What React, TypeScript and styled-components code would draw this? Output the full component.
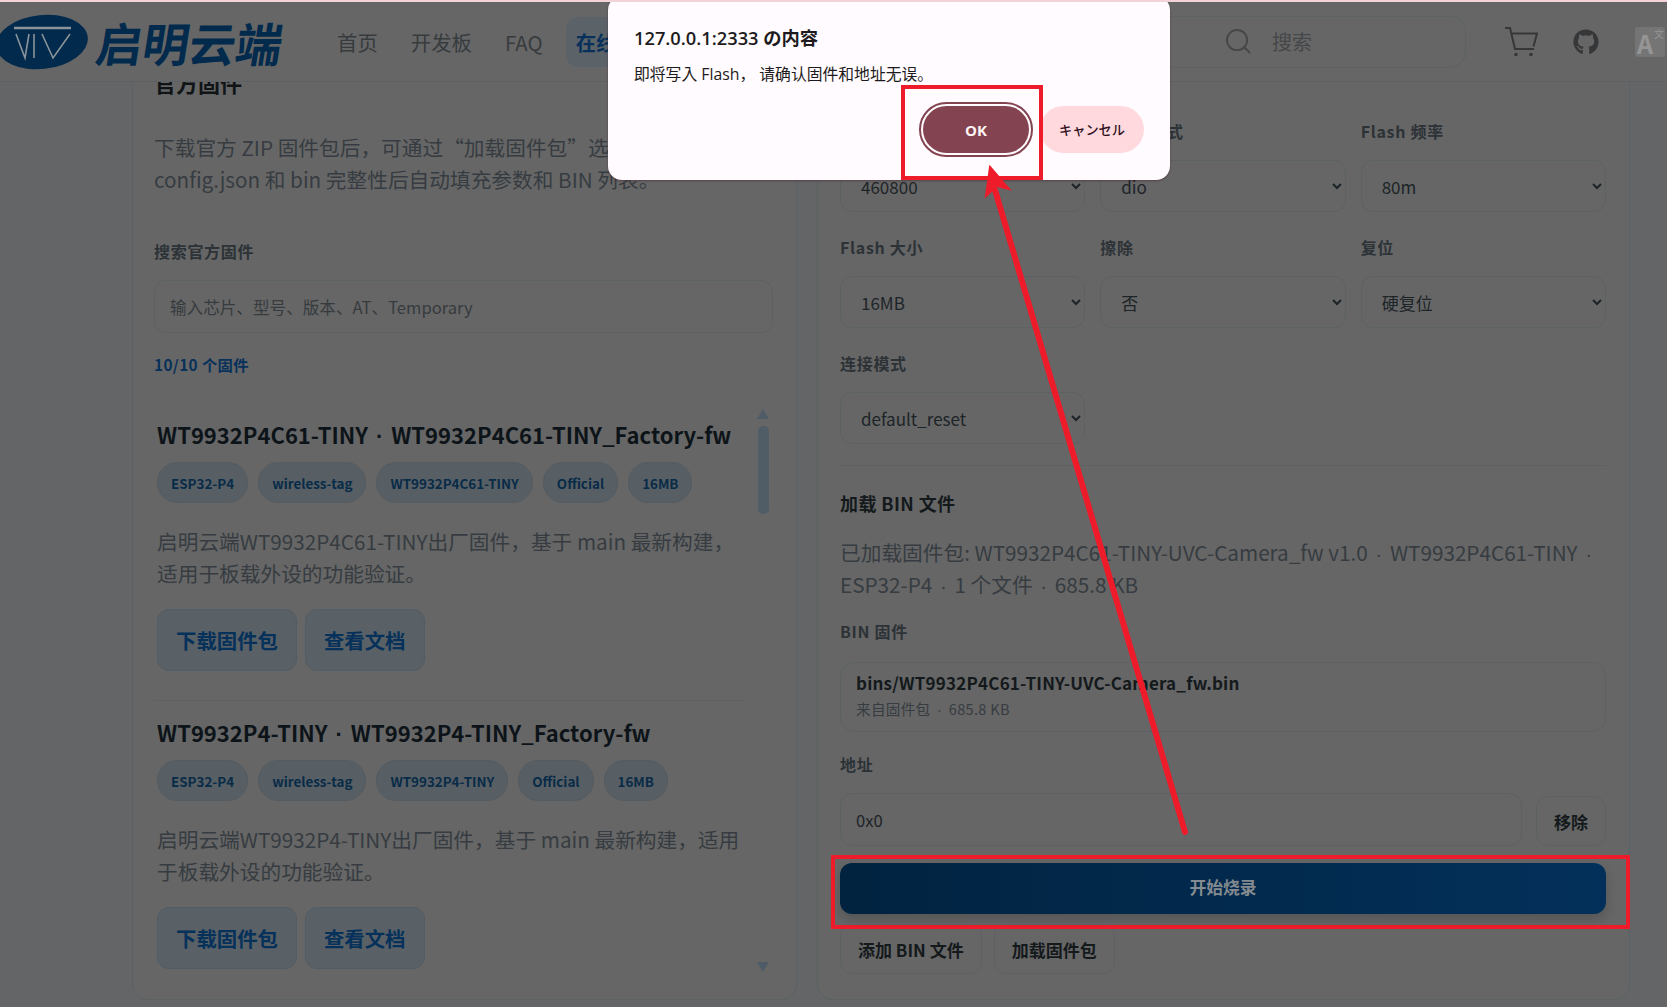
import React from 'react';
import styled, { createGlobalStyle } from 'styled-components';
import { FaGithub } from 'react-icons/fa';

const GlobalStyle = createGlobalStyle`
  html, body {
    margin: 0;
    padding: 0;
    height: 100%;
    overflow: hidden;
    background: #636566;
    font-family: "Noto Sans CJK SC", "Noto Sans", sans-serif;
  }
  * { box-sizing: border-box; }
  input::placeholder { color: #363b3e; opacity: 1; }
`;

const Page = styled.div`
  position: relative;
  width: 1667px;
  height: 1007px;
  overflow: hidden;
  border-top: 2px solid #f3d3d8;
  display: flex;
  flex-direction: column;
`;

const Header = styled.header`
  flex: none;
  height: 80px;
  display: flex;
  align-items: center;
  background: #666666;
  border-bottom: 1px solid #5e6163;
  padding-right: 2px;
`;

const Logo = styled.div`
  width: 283px;
  height: 60px;
  margin-right: 44px;
  display: flex;
  align-items: center;
  gap: 9px;
`;

const LogoText = styled.span`
  display: inline-block;
  transform: skewX(-9deg);
  font-size: 46.5px;
  line-height: 60px;
  font-weight: 700;
  color: #012a4d;
  white-space: nowrap;
`;

const Nav = styled.nav`
  display: flex;
  align-items: center;
  gap: 13px;
`;

const NavItem = styled.a<{ $active?: boolean }>`
  height: 50px;
  padding: 0 10px;
  display: flex;
  align-items: center;
  border-radius: 12px;
  font-size: 20.4px;
  white-space: nowrap;
  color: ${p => (p.$active ? '#07315a' : '#363b3e')};
  font-weight: ${p => (p.$active ? 700 : 400)};
  background: ${p => (p.$active ? '#5b6369' : 'transparent')};
`;

const HeaderRight = styled.div`
  margin-left: auto;
  display: flex;
  align-items: center;
`;

const SearchBox = styled.div`
  width: 310px;
  height: 52px;
  margin-right: 39px;
  padding-left: 69px;
  display: flex;
  align-items: center;
  gap: 21px;
  border: 1px solid #5c6264;
  border-radius: 16px;
  font-size: 20px;
  color: #454749;
`;

const HeaderIcon = styled.div<{ $right: number }>`
  display: flex;
  margin-right: ${p => p.$right}px;
  color: #363738;
`;

const TranslateBadge = styled.div`
  position: relative;
  width: 30px;
  height: 30px;
  border-radius: 3px;
  background: #757575;
  color: #959595;
  font-size: 25px;
  line-height: 32px;
  font-weight: 700;
  padding-left: 2px;
`;

const TranslateSmall = styled.span`
  position: absolute;
  top: 1px;
  right: 1px;
  font-size: 10px;
  line-height: 12px;
  font-weight: 400;
`;

const Main = styled.main`
  flex: 1;
  min-height: 0;
  overflow: hidden;
`;

const Columns = styled.div`
  margin-top: -32px;
  padding-left: 132px;
  display: grid;
  grid-template-columns: 665px 813px;
  gap: 20px;
`;

const Panel = styled.section`
  height: 950px;
  background: #666666;
  border: 1px solid #5c6163;
  border-radius: 16px;
`;

const LeftPanel = styled(Panel)`
  padding: 17px 23px 0 21px;
`;

const RightPanel = styled(Panel)`
  padding: 68px 23px 0 22px;
`;

const PanelTitle = styled.h2`
  margin: 0 0 35px;
  font-size: 22px;
  line-height: 28px;
  font-weight: 700;
  color: #101416;
`;

const Paragraph = styled.p<{ $bottom?: number }>`
  margin: 0 0 ${p => p.$bottom ?? 0}px;
  font-size: 20.7px;
  line-height: 32px;
  color: #363c41;
  white-space: nowrap;
`;

const Dot = styled.span`
  margin: 0 3px;
  line-height: 0;
  font-family: "Liberation Sans", sans-serif;
`;

const Label = styled.div`
  margin-bottom: 17px;
  font-size: 16px;
  line-height: 24px;
  font-weight: 700;
  letter-spacing: 0.7px;
  color: #2c3236;
`;

const TextInput = styled.input`
  display: block;
  width: 100%;
  height: 53px;
  padding: 0 15px;
  background: transparent;
  border: 1px solid #5c6264;
  border-radius: 12px;
  font: 400 16.6px "Noto Sans CJK SC", sans-serif;
  color: #1d2226;
  outline: none;
`;

const CountText = styled.div`
  margin-top: 19px;
  font-size: 15.3px;
  line-height: 24px;
  font-weight: 700;
  letter-spacing: 0.4px;
  color: #07315a;
`;

const ListWrap = styled.div`
  margin-top: 23px;
  height: 575px;
  display: flex;
`;

const List = styled.div`
  flex: 1;
  min-width: 0;
  overflow: hidden;
`;

const Item = styled.article`
  padding: 16px 8px 29px 3px;
  border-bottom: 1px solid #5c6264;
  &:first-child { padding-top: 20px; }
  &:last-child { border-bottom: none; }
`;

const ItemTitle = styled.h3`
  margin: 0 0 13px;
  font-size: 22px;
  line-height: 30px;
  font-weight: 700;
  color: #0d1419;
  white-space: nowrap;
`;

const Tags = styled.div`
  display: flex;
  gap: 10px;
  margin-bottom: 22px;
`;

const Tag = styled.span`
  height: 41px;
  padding: 0 13px;
  display: flex;
  align-items: center;
  border: 1px solid #545c62;
  border-radius: 20px;
  background: #585f64;
  font-size: 13.4px;
  font-weight: 700;
  color: #082b48;
`;

const ItemActions = styled.div`
  display: flex;
  gap: 8px;
  margin-top: 20px;
`;

const GhostLink = styled.a`
  height: 62px;
  padding: 0 18px;
  display: flex;
  align-items: center;
  border: 1px solid #525c64;
  border-radius: 12px;
  background: #596066;
  font-size: 20.4px;
  font-weight: 700;
  color: #05315a;
`;

const Track = styled.div`
  flex: none;
  width: 12px;
  margin: 10px 4px 0 12px;
  display: flex;
  flex-direction: column;
  align-items: center;
`;

const Arrow = styled.div<{ $down?: boolean }>`
  width: 0;
  height: 0;
  border-left: 6.5px solid transparent;
  border-right: 6.5px solid transparent;
  ${p => (p.$down
    ? 'border-top: 10px solid #4f5c67; margin-top: auto; margin-bottom: 2px;'
    : 'border-bottom: 10px solid #4f5c67;')}
`;

const Thumb = styled.div`
  width: 11px;
  height: 88px;
  margin-top: 7px;
  border-radius: 5px;
  background: #515d66;
`;

const FieldGrid = styled.div`
  display: grid;
  grid-template-columns: repeat(3, 1fr);
  gap: 23px 15px;
`;

const Select = styled.select`
  display: block;
  width: 100%;
  height: 52px;
  padding: 0 16px;
  background: transparent;
  border: 1px solid #5c6264;
  border-radius: 12px;
  font: 400 17px "Noto Sans CJK SC", sans-serif;
  color: #1d2428;
  outline: none;
`;

const Divider = styled.hr`
  margin: 21px 0 23px;
  border: none;
  border-top: 1px solid #5c6264;
`;

const SectionTitle = styled.h3`
  margin: 0 0 19px;
  font-size: 18px;
  line-height: 28px;
  font-weight: 700;
  letter-spacing: 0.4px;
  color: #14191c;
`;

const FileBox = styled.div`
  height: 70px;
  margin: 19px 0 20px;
  padding: 6px 15px 0;
  border: 1px solid #5c6264;
  border-radius: 14px;
`;

const FileLabel = styled(Label)`
  margin-bottom: 0;
`;

const FileName = styled.div`
  font-size: 17px;
  line-height: 28px;
  font-weight: 700;
  letter-spacing: 0.2px;
  color: #14191c;
`;

const FileMeta = styled.div`
  font-size: 14.6px;
  line-height: 24px;
  letter-spacing: 0.3px;
  color: #363c41;
`;

const AddressRow = styled.div`
  display: flex;
  align-items: flex-end;
  gap: 14px;
`;

const OutlineButton = styled.button`
  flex: none;
  height: 50px;
  padding: 0 17px;
  background: transparent;
  border: 1px solid #5c6264;
  border-radius: 12px;
  font: 700 17px "Noto Sans CJK SC", sans-serif;
  color: #14191c;
`;

const FlashButton = styled.button`
  display: block;
  width: 100%;
  height: 51px;
  margin-top: 17px;
  padding: 0 0 4px;
  border: none;
  border-radius: 12px;
  background: linear-gradient(90deg, #012340, #03305a);
  box-shadow: 0 6px 12px rgba(0, 0, 0, 0.16);
  font: 700 16.8px "Noto Sans CJK SC", sans-serif;
  color: #838b90;
`;

const BottomActions = styled.div`
  display: flex;
  gap: 12px;
  margin-top: 10px;
`;

const Dialog = styled.div`
  position: absolute;
  left: 608px;
  top: -6px;
  width: 562px;
  height: 184px;
  padding: 30px 26px 0 26px;
  background: #fffbfe;
  border-radius: 14px;
  box-shadow: 0 1px 2px rgba(70, 30, 40, 0.5);
  font-family: "Open Sans", "Noto Sans CJK JP", sans-serif;
  color: #1d1b20;
`;

const DialogTitle = styled.div`
  font-size: 18.3px;
  line-height: 24px;
  font-weight: 600;
`;

const DialogBody = styled.div`
  margin-top: 14px;
  font-size: 15.8px;
  line-height: 20px;
  text-spacing-trim: space-all;
`;

const DialogActions = styled.div`
  display: flex;
  justify-content: flex-end;
  gap: 11px;
  margin-top: 22px;
`;

const OkButton = styled.button`
  width: 106px;
  height: 47px;
  border: none;
  border-radius: 24px;
  background: #844350;
  outline: 2px solid #844350;
  outline-offset: 2px;
  font: 700 15px "Open Sans", sans-serif;
  color: #fdf5f6;
`;

const CancelButton = styled.button`
  width: 104px;
  height: 47px;
  padding: 0;
  border: none;
  border-radius: 24px;
  background: #ffd9de;
  font: 500 13.2px "Noto Sans CJK JP", sans-serif;
  color: #31101d;
`;

const Annotation = styled.svg`
  position: absolute;
  left: 0;
  top: -2px;
  width: 1667px;
  height: 1007px;
  pointer-events: none;
`;

const firmwares = [
  {
    model: 'WT9932P4C61-TINY',
    desc: ['启明云端WT9932P4C61-TINY出厂固件，基于 main 最新构建，', '适用于板载外设的功能验证。'],
  },
  {
    model: 'WT9932P4-TINY',
    desc: ['启明云端WT9932P4-TINY出厂固件，基于 main 最新构建，适用', '于板载外设的功能验证。'],
  },
];

const LogoMark = () => (
  <svg width="88" height="58" viewBox="0 0 88 58" style={{ flex: 'none' }}>
    <ellipse cx="42" cy="29" rx="46" ry="27" transform="rotate(-6 42 29)" fill="#012a4d" />
    <g fill="none" stroke="#8a949a" strokeWidth="1.6">
      <path d="M14 15h57" strokeWidth="2.4" />
      <path d="M16 21l9 24 4-24" />
      <path d="M34 21v24" />
      <path d="M42 21l11 24 17-24" />
    </g>
  </svg>
);

const SearchIcon = () => (
  <svg width="25" height="25" viewBox="0 0 26 26" fill="none" stroke="#454749" strokeWidth="2">
    <circle cx="11.5" cy="11.5" r="10.5" />
    <path d="M19 19l6 6" />
  </svg>
);

const CartIcon = () => (
  <svg width="33" height="30" viewBox="0 0 33 30" fill="none" stroke="#363738" strokeWidth="2">
    <path d="M0 1h5l5 21h19" />
    <path d="M6 6.5h26l-3.5 13" />
    <circle cx="11" cy="27.5" r="1.8" fill="#363738" stroke="none" />
    <circle cx="26" cy="27.5" r="1.8" fill="#363738" stroke="none" />
  </svg>
);

export default function App() {
  return (
    <>
      <GlobalStyle />
      <Page>
        <Header>
          <Logo>
            <LogoMark />
            <LogoText>启明云端</LogoText>
          </Logo>
          <Nav>
            <NavItem>首页</NavItem>
            <NavItem>开发板</NavItem>
            <NavItem>FAQ</NavItem>
            <NavItem $active>在线烧录</NavItem>
          </Nav>
          <HeaderRight>
            <SearchBox>
              <SearchIcon />
              搜索
            </SearchBox>
            <HeaderIcon $right={35}><CartIcon /></HeaderIcon>
            <HeaderIcon $right={36}><FaGithub size={26} /></HeaderIcon>
            <TranslateBadge>
              A<TranslateSmall>文</TranslateSmall>
            </TranslateBadge>
          </HeaderRight>
        </Header>

        <Main>
          <Columns>
            <LeftPanel>
              <PanelTitle>官方固件</PanelTitle>
              <Paragraph $bottom={44}>
                下载官方 ZIP 固件包后，可通过“加载固件包”选择文件，校验
                <br />
                config.json 和 bin 完整性后自动填充参数和 BIN 列表。
              </Paragraph>
              <Label>搜索官方固件</Label>
              <TextInput placeholder="输入芯片、型号、版本、AT、Temporary" />
              <CountText>10/10 个固件</CountText>
              <ListWrap>
                <List>
                  {firmwares.map(fw => (
                    <Item key={fw.model}>
                      <ItemTitle>{fw.model} <Dot>·</Dot> {fw.model}_Factory-fw</ItemTitle>
                      <Tags>
                        <Tag>ESP32-P4</Tag>
                        <Tag>wireless-tag</Tag>
                        <Tag>{fw.model}</Tag>
                        <Tag>Official</Tag>
                        <Tag>16MB</Tag>
                      </Tags>
                      <Paragraph>
                        {fw.desc[0]}
                        <br />
                        {fw.desc[1]}
                      </Paragraph>
                      <ItemActions>
                        <GhostLink>下载固件包</GhostLink>
                        <GhostLink>查看文档</GhostLink>
                      </ItemActions>
                    </Item>
                  ))}
                </List>
                <Track>
                  <Arrow />
                  <Thumb />
                  <Arrow $down />
                </Track>
              </ListWrap>
            </LeftPanel>

            <RightPanel>
              <FieldGrid>
                <div>
                  <Label>波特率</Label>
                  <Select defaultValue="460800">
                    <option>460800</option>
                    <option>921600</option>
                  </Select>
                </div>
                <div>
                  <Label>Flash 模式</Label>
                  <Select defaultValue="dio">
                    <option>dio</option>
                    <option>qio</option>
                  </Select>
                </div>
                <div>
                  <Label>Flash 频率</Label>
                  <Select defaultValue="80m">
                    <option>80m</option>
                    <option>40m</option>
                  </Select>
                </div>
                <div>
                  <Label>Flash 大小</Label>
                  <Select defaultValue="16MB">
                    <option>16MB</option>
                    <option>8MB</option>
                  </Select>
                </div>
                <div>
                  <Label>擦除</Label>
                  <Select defaultValue="否">
                    <option>否</option>
                    <option>是</option>
                  </Select>
                </div>
                <div>
                  <Label>复位</Label>
                  <Select defaultValue="硬复位">
                    <option>硬复位</option>
                    <option>软复位</option>
                  </Select>
                </div>
                <div>
                  <Label>连接模式</Label>
                  <Select defaultValue="default_reset">
                    <option>default_reset</option>
                    <option>no_reset</option>
                  </Select>
                </div>
              </FieldGrid>
              <Divider />
              <SectionTitle>加载 BIN 文件</SectionTitle>
              <Paragraph $bottom={19}>
                已加载固件包: WT9932P4C61-TINY-UVC-Camera_fw v1.0 <Dot>·</Dot> WT9932P4C61-TINY <Dot>·</Dot>
                <br />
                ESP32-P4 <Dot>·</Dot> 1 个文件 <Dot>·</Dot> 685.8 KB
              </Paragraph>
              <FileLabel>BIN 固件</FileLabel>
              <FileBox>
                <FileName>bins/WT9932P4C61-TINY-UVC-Camera_fw.bin</FileName>
                <FileMeta>来自固件包 <Dot>·</Dot> 685.8 KB</FileMeta>
              </FileBox>
              <Label>地址</Label>
              <AddressRow>
                <TextInput defaultValue="0x0" />
                <OutlineButton>移除</OutlineButton>
              </AddressRow>
              <FlashButton>开始烧录</FlashButton>
              <BottomActions>
                <OutlineButton>添加 BIN 文件</OutlineButton>
                <OutlineButton>加载固件包</OutlineButton>
              </BottomActions>
            </RightPanel>
          </Columns>
        </Main>

        <Dialog>
          <DialogTitle>127.0.0.1:2333 の内容</DialogTitle>
          <DialogBody>即将写入 Flash， 请确认固件和地址无误。</DialogBody>
          <DialogActions>
            <OkButton>OK</OkButton>
            <CancelButton>キャンセル</CancelButton>
          </DialogActions>
        </Dialog>

        <Annotation viewBox="0 0 1667 1007">
          <g fill="none" stroke="#ee1c2b" strokeWidth="4">
            <rect x="903" y="87" width="138" height="91" />
            <rect x="833" y="857" width="795" height="70" />
          </g>
          <path d="M1185 832L995 190" stroke="#ee1c2b" strokeWidth="6" strokeLinecap="round" />
          <path d="M990 167L1009 189L997 186L986 196Z" fill="#ee1c2b" stroke="#ee1c2b" strokeWidth="2" />
        </Annotation>
      </Page>
    </>
  );
}
